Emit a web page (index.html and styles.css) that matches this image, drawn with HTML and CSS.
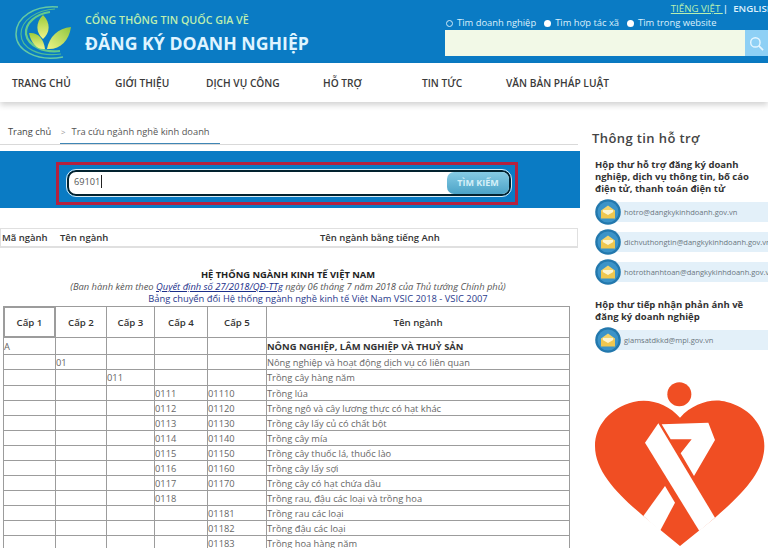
FILE: index.html
```html
<!DOCTYPE html>
<html lang="vi">
<head>
<meta charset="utf-8">
<title>Đăng ký doanh nghiệp</title>
<link rel="stylesheet" href="styles.css">
</head>
<body>
<header class="top">
  <svg class="logo" viewBox="0 0 85 63" width="85" height="63" aria-hidden="true">
    <defs>
      <linearGradient id="leaf" x1="0" y1="0" x2="0" y2="1">
        <stop offset="0" stop-color="#9ccc3c"/>
        <stop offset="1" stop-color="#f2f48a"/>
      </linearGradient>
      <linearGradient id="leaf-r" x1="1" y1="0" x2="0" y2="1">
        <stop offset="0" stop-color="#8fc63f"/>
        <stop offset="1" stop-color="#eef487"/>
      </linearGradient>
    </defs>
    <path d="M58 7C35 5 16 17 16 34c0 16 20 28 47 23" fill="none" stroke="#64c9a4" stroke-width="1.5"/>
    <path d="M55 9C37 10 21 20 21 34c0 14 17 23 40 20" fill="none" stroke="#4dbb96" stroke-width="1.2"/>
    <path d="M50 12C36 14 25 23 26 34c2 12 18 19 34 17" fill="none" stroke="#62c98d" stroke-width="2.2"/>
    <path d="M43 15C35 23 36 33 43 39C50 33 51 23 43 15Z" fill="url(#leaf)"/>
    <path d="M29 33C38 32 44 39 45 49C37 50 31 43 29 33Z" fill="url(#leaf)"/>
    <path d="M71 27C58 28 49 37 47 49C60 50 69 41 71 27Z" fill="url(#leaf-r)"/>
  </svg>
  <div class="brand">
    <p class="brand-small">CỔNG THÔNG TIN QUỐC GIA VỀ</p>
    <p class="brand-big">ĐĂNG KÝ DOANH NGHIỆP</p>
  </div>
  <div class="top-right">
    <div class="lang"><a class="lang-active">TIẾNG VIỆT </a> | &nbsp;ENGLISH</div>
    <div class="scopes">
      <span class="scope"><i class="dot dot-on"></i>Tìm doanh nghiệp</span>
      <span class="scope"><i class="dot"></i>Tìm hợp tác xã</span>
      <span class="scope"><i class="dot"></i>Tìm trong website</span>
    </div>
    <div class="site-search">
      <div class="site-input"></div>
      <div class="site-btn">
        <svg viewBox="0 0 16 16" width="15" height="15" aria-hidden="true"><circle cx="6.8" cy="6.8" r="5" fill="none" stroke="#e6f6ff" stroke-width="1.5"/><path d="M10.5 10.5L15 15" stroke="#e6f6ff" stroke-width="1.8"/></svg>
      </div>
    </div>
  </div>
</header>

<nav class="menu">
  <span>TRANG CHỦ</span><span>GIỚI THIỆU</span><span>DỊCH VỤ CÔNG</span><span>HỖ TRỢ</span><span>TIN TỨC</span><span>VĂN BẢN PHÁP LUẬT</span>
</nav>

<div class="page">
  <main class="content">
    <div class="crumbs">
      <span class="crumb-home">Trang chủ</span>
      <span class="crumb-current"><em>&gt;</em>Tra cứu ngành nghề kinh doanh</span>
    </div>

    <section class="lookup">
      <div class="lookup-mark">
        <div class="lookup-box">
          <span class="lookup-value">69101</span><i class="caret"></i>
          <span class="lookup-btn">TÌM KIẾM</span>
        </div>
      </div>
    </section>

    <div class="result-head">
      <b class="rh-code">Mã ngành</b><b class="rh-name">Tên ngành</b><b>Tên ngành bằng tiếng Anh</b>
    </div>

    <div class="doc-title">
      <h1>HỆ THỐNG NGÀNH KINH TẾ VIỆT NAM</h1>
      <p class="doc-note">(Ban hành kèm theo <a>Quyết định số 27/2018/QĐ-TTg</a> ngày 06 tháng 7 năm 2018 của Thủ tướng Chính phủ)</p>
      <p class="doc-link">Bảng chuyển đổi Hệ thống ngành nghề kinh tế Việt Nam VSIC 2018 - VSIC 2007</p>
    </div>

    <table class="vsic">
      <colgroup><col class="c1"><col class="c2"><col class="c3"><col class="c4"><col class="c5"><col></colgroup>
      <thead>
        <tr><th>Cấp 1</th><th>Cấp 2</th><th>Cấp 3</th><th>Cấp 4</th><th>Cấp 5</th><th>Tên ngành</th></tr>
      </thead>
      <tbody>
        <tr class="sector"><td>A</td><td></td><td></td><td></td><td></td><td>NÔNG NGHIỆP, LÂM NGHIỆP VÀ THUỶ SẢN</td></tr>
        <tr><td></td><td>01</td><td></td><td></td><td></td><td>Nông nghiệp và hoạt động dịch vụ có liên quan</td></tr>
        <tr class="group"><td></td><td></td><td>011</td><td></td><td></td><td>Trồng cây hàng năm</td></tr>
        <tr><td></td><td></td><td></td><td>0111</td><td>01110</td><td>Trồng lúa</td></tr>
        <tr><td></td><td></td><td></td><td>0112</td><td>01120</td><td>Trồng ngô và cây lương thực có hạt khác</td></tr>
        <tr><td></td><td></td><td></td><td>0113</td><td>01130</td><td>Trồng cây lấy củ có chất bột</td></tr>
        <tr><td></td><td></td><td></td><td>0114</td><td>01140</td><td>Trồng cây mía</td></tr>
        <tr><td></td><td></td><td></td><td>0115</td><td>01150</td><td>Trồng cây thuốc lá, thuốc lào</td></tr>
        <tr><td></td><td></td><td></td><td>0116</td><td>01160</td><td>Trồng cây lấy sợi</td></tr>
        <tr><td></td><td></td><td></td><td>0117</td><td>01170</td><td>Trồng cây có hạt chứa dầu</td></tr>
        <tr><td></td><td></td><td></td><td>0118</td><td></td><td>Trồng rau, đậu các loại và trồng hoa</td></tr>
        <tr><td></td><td></td><td></td><td></td><td>01181</td><td>Trồng rau các loại</td></tr>
        <tr><td></td><td></td><td></td><td></td><td>01182</td><td>Trồng đậu các loại</td></tr>
        <tr><td></td><td></td><td></td><td></td><td>01183</td><td>Trồng hoa hàng năm</td></tr>
      </tbody>
    </table>
  </main>

  <aside class="side">
    <h2>Thông tin hỗ trợ</h2>
    <h3>Hộp thư hỗ trợ đăng ký doanh nghiệp, dịch vụ thông tin, bố cáo điện tử, thanh toán điện tử</h3>
    <div class="mail"><span class="mail-icon"><svg viewBox="0 0 26 26" width="26" height="26" aria-hidden="true"><use href="#env"/></svg></span><span class="mail-text">hotro@dangkykinhdoanh.gov.vn</span></div>
    <div class="mail"><span class="mail-icon"><svg viewBox="0 0 26 26" width="26" height="26" aria-hidden="true"><use href="#env"/></svg></span><span class="mail-text">dichvuthongtin@dangkykinhdoanh.gov.vn</span></div>
    <div class="mail"><span class="mail-icon"><svg viewBox="0 0 26 26" width="26" height="26" aria-hidden="true"><use href="#env"/></svg></span><span class="mail-text">hotrothanhtoan@dangkykinhdoanh.gov.vn</span></div>
    <h3 class="second">Hộp thư tiếp nhận phản ánh về đăng ký doanh nghiệp</h3>
    <div class="mail"><span class="mail-icon"><svg viewBox="0 0 26 26" width="26" height="26" aria-hidden="true"><use href="#env"/></svg></span><span class="mail-text">giamsatdkkd@mpi.gov.vn</span></div>

    <svg class="heart" viewBox="0 0 564 567" width="188" height="189" aria-hidden="true">
      <circle cx="298" cy="112" r="36" fill="#f04e23"/>
      <path d="M300 182C340 137 400 122 440 135C510 152 553 207 553 267C553 347 480 417 405 482L300 567L190 477C120 417 45 347 45 267C45 207 90 152 160 135C210 122 265 142 300 182Z" fill="#f04e23"/>
      <path d="M235 199L405 482L358 522L195 257Z" fill="#fff"/>
      <path d="M255 387L285 437L240 522L190 477Z" fill="#fff"/>
      <path d="M245 202L385 197L405 249L342 357L302 289L335 247L272 247Z" fill="#fff"/>
    </svg>
  </aside>
</div>

<svg class="defs" width="0" height="0" aria-hidden="true">
  <symbol id="env" viewBox="0 0 26 26">
    <circle cx="13" cy="13" r="12.8" fill="#2378ad"/>
    <circle cx="13" cy="13" r="10.5" fill="#3b93c8"/>
    <path d="M6 11.5L13 6.5L20 11.5V19H6Z" fill="#f3d36b"/>
    <path d="M8 11L18 11L18 14L13 16.5L8 14Z" fill="#fdf5d0"/>
    <path d="M6 12L13 16L20 12V19.5H6Z" fill="#f0c74f"/>
  </symbol>
</svg>
</body>
</html>
```

FILE: styles.css
```css
* { box-sizing: border-box; }

html, body {
  margin: 0;
  height: 548px;
  overflow: hidden;
  background: #fff;
  font-family: "Open Sans", "Liberation Sans", sans-serif;
  color: #333;
}

p, h1, h2, h3 { margin: 0; }

.defs { position: absolute; }

/* Blue masthead */
.top {
  height: 63px;
  background: #0a7bc4;
  display: flex;
}

.logo { flex: none; }

.brand { margin: 12px 0 0 0; flex: 1; }

.brand-small {
  font-size: 10.7px;
  line-height: 16px;
  font-weight: 600;
  color: #bdeeb0;
}

.brand-big {
  margin-top: 3px;
  font-size: 17.7px;
  line-height: 24px;
  font-weight: 700;
  color: #dff4ff;
}

.top-right {
  width: 323px;
  flex: none;
  color: #dcf0fb;
}

.lang {
  height: 16px;
  padding-top: 2px;
  text-align: right;
  white-space: nowrap;
  font-size: 9.7px;
  line-height: 14px;
  font-weight: 600;
  margin-right: -6px;
}

.lang-active { color: #b8f0b0; text-decoration: underline; font-weight: 400; }

.scopes {
  display: flex;
  height: 14px;
  padding-left: 1px;
  gap: 8px;
  font-size: 9.4px;
  line-height: 12px;
}

.scope { display: flex; align-items: center; gap: 4px; white-space: nowrap; }

.dot {
  width: 7px;
  height: 7px;
  border-radius: 50%;
  background: #fff;
}

.dot-on {
  background: #0a7bc4;
  border: 1.5px solid #cfeaf8;
}

.site-search { display: flex; height: 26px; }

.site-input { flex: 1; background: #f2f9e7; }

.site-btn {
  width: 23px;
  background: #8ed0f5;
  display: flex;
  align-items: center;
  justify-content: center;
}

/* Main menu */
.menu {
  height: 39px;
  padding-left: 12px;
  display: grid;
  grid-template-columns: 103px 91px 117px 99px 84px auto;
  align-items: center;
  background: #fff;
  box-shadow: 0 3px 6px rgba(0, 0, 0, .18);
  font-size: 10.2px;
  font-weight: 600;
  color: #3a3a3a;
  position: relative;
}

.page {
  display: grid;
  grid-template-columns: 580px 188px;
}

/* Left column */
.crumbs {
  height: 43px;
  padding: 23px 0 0 8px;
  margin-right: 2px;
  display: flex;
  border-bottom: 1px solid #d9d9d9;
  font-size: 9.3px;
  line-height: 14px;
  color: #555;
}

.crumb-home { width: 52px; color: #444; }

.crumb-current {
  height: 19px;
  width: 160px;
  border-bottom: 1px solid #3f86b5;
  white-space: nowrap;
}

.crumb-current em {
  font-style: normal;
  font-size: 8px;
  color: #999;
  margin: 0 6px 0 1px;
}

.lookup {
  margin-top: 6px;
  height: 57px;
  background: #0a7bc4;
  padding: 11px 0 0 56px;
}

.lookup-mark {
  width: 462px;
  height: 43px;
  border: 3px solid #b4213f;
  padding: 5px 4px 0 8px;
}

.lookup-box {
  height: 26px;
  border-radius: 9px;
  background: #fff;
  border: 2px solid #02222f;
  outline: 1px solid #d6edf7;
  display: flex;
  align-items: center;
  padding-left: 5px;
  font-size: 9.2px;
  color: #555;
}

.lookup-value { margin-top: -3px; }

.caret { width: 1px; height: 13px; margin: -3px 0 0 1px; background: #222; }

.lookup-btn {
  margin-left: auto;
  width: 62px;
  height: 22px;
  border-radius: 7px;
  background: linear-gradient(#86cbe4, #4ba3c7);
  color: #d4f0f8;
  font-size: 9px;
  font-weight: 700;
  text-align: center;
  line-height: 22px;
}

.result-head {
  margin: 20px 2px 0 0;
  height: 20px;
  border: 1px solid #e0e0e0;
  border-bottom-width: 2px;
  padding-left: 1px;
  display: flex;
  align-items: center;
  font-size: 9.5px;
  color: #333;
}

.result-head b { font-weight: 600; }
.rh-code { width: 58px; }
.rh-name { width: 260px; }

.doc-title {
  margin-top: 20px;
  text-align: center;
  width: 576px;
  font-size: 9.35px;
  line-height: 12px;
}

.doc-title h1 { font-size: 9.35px; line-height: 13px; font-weight: 700; color: #222; }

.doc-note { font-style: italic; color: #555; }
.doc-note a { color: #1c2f8a; text-decoration: underline; }
.doc-link { padding-left: 60px; color: #2a3a8c; }

.vsic {
  margin: 1px 0 0 3px;
  width: 567px;
  table-layout: fixed;
  border-collapse: collapse;
  font-size: 9.3px;
  color: #666;
}

.c1 { width: 52px; }
.c2 { width: 51px; }
.c3 { width: 48px; }
.c4 { width: 53px; }
.c5 { width: 59px; }

.vsic th, .vsic td {
  border: 1px solid #9c9c9c;
  padding: 0;
  white-space: nowrap;
  overflow: hidden;
}

.vsic th {
  height: 31px;
  font-size: 9.7px;
  font-weight: 600;
  color: #333;
}

.vsic th:first-child { box-shadow: inset 0 0 0 1px #9c9c9c; }

.vsic td { height: 15px; line-height: 13px; }
.sector td { height: 17px; }
.group td { height: 16px; }
.sector td:last-child { font-size: 9.4px; font-weight: 700; color: #333; }

/* Sidebar */
.side { padding: 27px 0 0 12px; overflow: hidden; }

.side h2 {
  font-size: 13px;
  line-height: 18px;
  font-weight: 600;
  letter-spacing: .4px;
  color: #444;
}

.side h3 {
  margin: 12px 0 4px 3px;
  font-size: 9.5px;
  line-height: 12px;
  font-weight: 700;
  color: #333;
}

.side h3.second { margin-top: 14px; }

.mail {
  display: flex;
  align-items: center;
  height: 26px;
  margin: 0 -4px 4px 3px;
  white-space: nowrap;
}

.mail-icon { flex: none; width: 26px; height: 26px; position: relative; z-index: 1; }
.mail-icon svg { display: block; }

.mail-text {
  flex: 1;
  height: 20px;
  margin-left: -13px;
  padding-left: 16px;
  background: #e3f0f9;
  font-size: 7.5px;
  line-height: 20px;
  color: #6a7680;
  overflow: hidden;
}

.heart { display: block; margin: 4px 0 0 -12px; }
```
